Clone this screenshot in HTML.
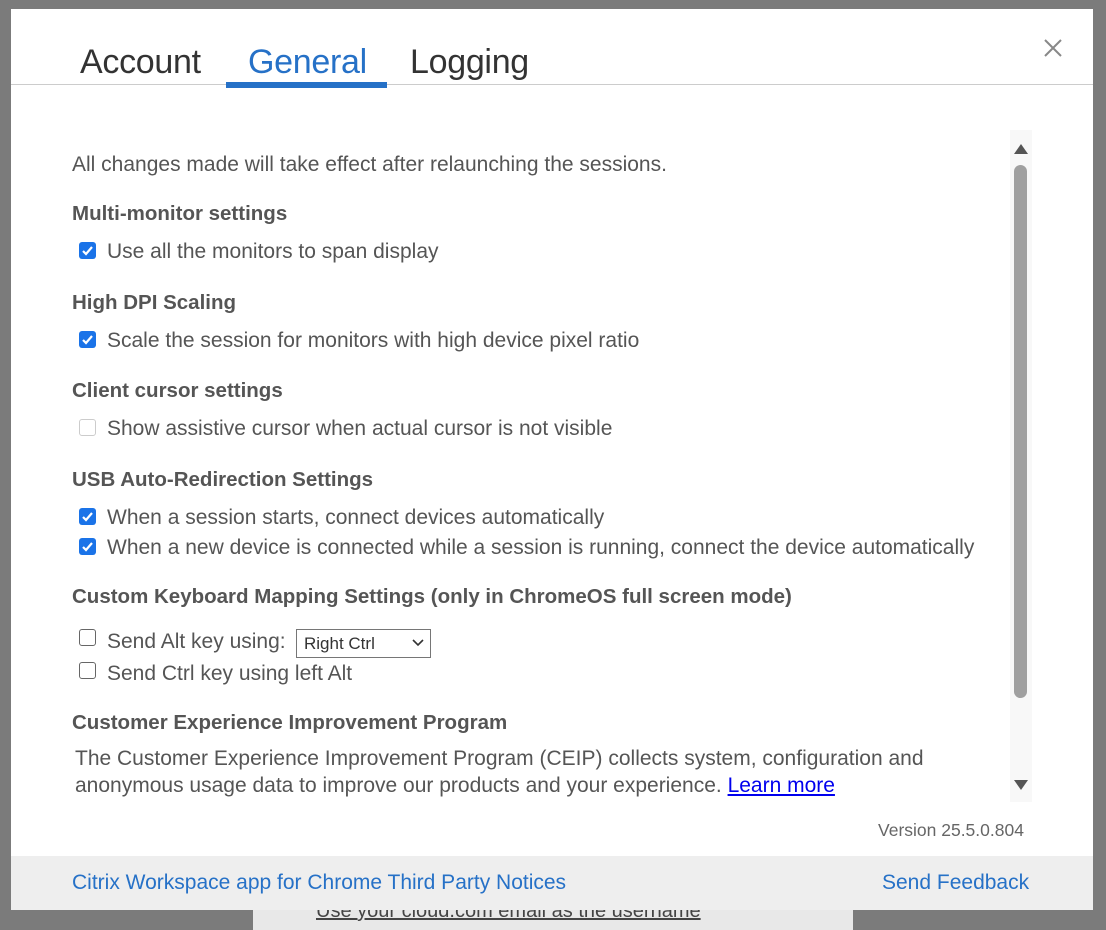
<!DOCTYPE html>
<html><head><meta charset="utf-8"><style>
*{margin:0;padding:0;box-sizing:border-box}
body{width:1106px;height:925px;background:#7b7b7b;position:relative;overflow:hidden;font-family:"Liberation Sans",sans-serif;color:#555}
.under{position:absolute;left:253px;top:890px;width:600px;height:40px;background:#e8e8e8}
.under span{position:absolute;left:63px;top:10px;font-size:20px;color:#444;text-decoration:underline}
.dlg{position:absolute;left:11px;top:9px;width:1082px;height:901px;background:#fff}
.tab{position:absolute;top:34px;font-size:34px;color:#333;letter-spacing:-0.3px}
.line{position:absolute;left:0;top:75px;width:1082px;height:1px;background:#ccc}
.ul{position:absolute;left:215px;top:73px;width:161px;height:6px;background:#2671c7}
.x{position:absolute;left:1031px;top:28px;width:22px;height:22px}
.t{position:absolute;font-size:21px;white-space:nowrap;transform-origin:0 0}
.h{font-weight:bold;color:#555;font-size:20.5px}
.cb{position:absolute;width:17px;height:17px;border-radius:3px}
.on{background:#1a73e8}
.off{border:1.5px solid #666;background:#fff}
.dis{border:1.5px solid #ccc;background:#fff}
.sel{position:absolute;left:285px;top:620px;width:135px;height:29px;border:1px solid #767676;font-size:17px;padding:4px 7px;color:#333}
.sb{position:absolute;left:999px;top:121px;width:22px;height:672px;background:#f8f8f8}
.thumb{position:absolute;left:4px;top:35px;width:13px;height:533px;background:#a0a0a0;border-radius:7px}
.foot{position:absolute;left:0;top:847px;width:1082px;height:54px;background:#eee}
a{color:#2671c7;text-decoration:none}
</style></head><body>
<div class="under"><span>Use your cloud.com email as the username</span></div>
<div class="dlg">
<div class="tab" style="left:69px">Account</div>
<div class="tab" style="left:237px;color:#2671c7">General</div>
<div class="tab" style="left:399px">Logging</div>
<div class="line"></div><div class="ul"></div>
<svg class="x" viewBox="0 0 22 22"><path d="M3 3L19 19M19 3L3 19" stroke="#888" stroke-width="2"/></svg>

<div class="t" style="left:61px;top:144px">All changes made will take effect after relaunching the sessions.</div>
<div class="t h" style="left:61px;top:193px">Multi-monitor settings</div>
<div class="cb on" style="left:68px;top:233px"><svg viewBox="0 0 17 17"><path d="M4 9l3 3 6-7" stroke="#fff" stroke-width="2.2" fill="none"/></svg></div>
<div class="t" style="left:96px;top:231px">Use all the monitors to span display</div>
<div class="t h" style="left:61px;top:282px">High DPI Scaling</div>
<div class="cb on" style="left:68px;top:322px"><svg viewBox="0 0 17 17"><path d="M4 9l3 3 6-7" stroke="#fff" stroke-width="2.2" fill="none"/></svg></div>
<div class="t" style="left:96px;top:320px">Scale the session for monitors with high device pixel ratio</div>
<div class="t h" style="left:61px;top:370px">Client cursor settings</div>
<div class="cb dis" style="left:68px;top:410px"></div>
<div class="t" style="left:96px;top:408px">Show assistive cursor when actual cursor is not visible</div>
<div class="t h" style="left:61px;top:459px">USB Auto-Redirection Settings</div>
<div class="cb on" style="left:68px;top:499px"><svg viewBox="0 0 17 17"><path d="M4 9l3 3 6-7" stroke="#fff" stroke-width="2.2" fill="none"/></svg></div>
<div class="t" style="left:96px;top:497px">When a session starts, connect devices automatically</div>
<div class="cb on" style="left:68px;top:529px"><svg viewBox="0 0 17 17"><path d="M4 9l3 3 6-7" stroke="#fff" stroke-width="2.2" fill="none"/></svg></div>
<div class="t" style="left:96px;top:527px">When a new device is connected while a session is running, connect the device automatically</div>
<div class="t h" style="left:61px;top:576px">Custom Keyboard Mapping Settings (only in ChromeOS full screen mode)</div>
<div class="cb off" style="left:68px;top:620px"></div>
<div class="t" style="left:96px;top:621px">Send Alt key using:</div>
<div class="sel">Right Ctrl<svg style="position:absolute;right:6px;top:9px" width="12" height="8" viewBox="0 0 12 8"><path d="M1 1l5 5 5-5" stroke="#333" stroke-width="1.6" fill="none"/></svg></div>
<div class="cb off" style="left:68px;top:653px"></div>
<div class="t" style="left:96px;top:653px">Send Ctrl key using left Alt</div>
<div class="t h" style="left:61px;top:702px">Customer Experience Improvement Program</div>
<div class="t" style="left:64px;top:738px">The Customer Experience Improvement Program (CEIP) collects system, configuration and</div>
<div class="t" style="left:64px;top:765px">anonymous usage data to improve our products and your experience. <span style="color:#00e;text-decoration:underline">Learn more</span></div>
<div class="sb"><div class="thumb"></div>
<svg style="position:absolute;left:4px;top:13px" width="14" height="11"><path d="M0 11L7 1L14 11Z" fill="#555"/></svg>
<svg style="position:absolute;left:4px;top:650px" width="14" height="11"><path d="M0 0L7 10L14 0Z" fill="#555"/></svg></div>
<div class="t" style="left:867px;top:811px;font-size:17.5px;color:#666">Version 25.5.0.804</div>
<div class="foot">
<a class="t" style="left:61px;top:15px">Citrix Workspace app for Chrome Third Party Notices</a>
<a class="t" style="left:871px;top:15px">Send Feedback</a>
</div>
</div>
</body></html>
